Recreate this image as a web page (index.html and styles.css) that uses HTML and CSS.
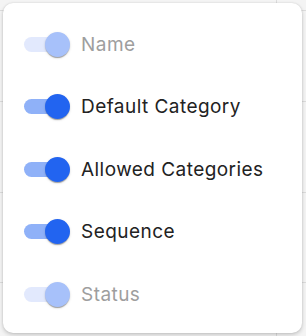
FILE: index.html
```html
<!DOCTYPE html>
<html lang="en">
<head>
    <meta charset="UTF-8">
    <meta name="viewport" content="width=device-width, initial-scale=1.0">
    <title>Columns</title>
    <link rel="stylesheet" href="styles.css">
</head>
<body>
    <div class="backdrop">
        <div class="grid-line row-1"></div>
        <div class="grid-line row-2"></div>
        <div class="grid-line row-3"></div>
        <div class="grid-line row-4"></div>
        <div class="col-line"></div>
    </div>

    <div class="menu">
        <label class="option disabled">
            <span class="switch on"><span class="track"></span><span class="thumb"></span></span>
            <span class="label-text">Name</span>
        </label>
        <label class="option">
            <span class="switch on"><span class="track"></span><span class="thumb"></span></span>
            <span class="label-text">Default Category</span>
        </label>
        <label class="option">
            <span class="switch on"><span class="track"></span><span class="thumb"></span></span>
            <span class="label-text">Allowed Categories</span>
        </label>
        <label class="option">
            <span class="switch on"><span class="track"></span><span class="thumb"></span></span>
            <span class="label-text">Sequence</span>
        </label>
        <label class="option disabled">
            <span class="switch on"><span class="track"></span><span class="thumb"></span></span>
            <span class="label-text">Status</span>
        </label>
    </div>
</body>
</html>
```

FILE: styles.css
```css
* {
    margin: 0;
    padding: 0;
    box-sizing: border-box;
}

body {
    font-family: Inter, "Noto Sans", sans-serif;
    background-color: #f4f4f4;
    width: 306px;
    height: 336px;
    overflow: hidden;
    position: relative;
}

/* table behind the popover */
.backdrop {
    position: absolute;
    inset: 0;
}

.grid-line {
    position: absolute;
    left: 0;
    width: 100%;
    height: 1px;
    background-color: #dcdcdc;
}

.row-1 { top: 10px; }
.row-2 { top: 101px; }
.row-3 { top: 192px; }
.row-4 { top: 282px; }

.col-line {
    position: absolute;
    top: 0;
    left: 276px;
    width: 1px;
    height: 100%;
    background-color: #dcdcdc;
}

.menu {
    position: absolute;
    top: 3px;
    left: 3px;
    width: 299px;
    height: 330px;
    background-color: white;
    border-radius: 10px;
    box-shadow: 0 2px 4px rgba(0, 0, 0, 0.18), 0 0 2px rgba(0, 0, 0, 0.12);
    padding: 10px 0 8px 21px;
}

.option {
    display: flex;
    align-items: center;
    height: 62.5px;
    gap: 11px;
    cursor: pointer;
}

.switch {
    position: relative;
    width: 46px;
    height: 25px;
    flex-shrink: 0;
}

.track {
    position: absolute;
    left: 0;
    top: 5px;
    width: 42px;
    height: 15px;
    border-radius: 8px;
    background-color: #8fb1f8;
}

.thumb {
    position: absolute;
    top: 0;
    right: 0;
    width: 25px;
    height: 25px;
    border-radius: 50%;
    background-color: #2264f0;
    box-shadow: 0 2px 1px -1px rgba(0, 0, 0, 0.2), 0 1px 1px rgba(0, 0, 0, 0.14), 0 1px 3px rgba(0, 0, 0, 0.12);
}

.label-text {
    font-size: 19px;
    color: #222;
    letter-spacing: 0.45px;
}

.disabled .track {
    background-color: #e2e9fd;
}

.disabled .thumb {
    background-color: #a7c1fa;
}

.disabled .label-text {
    color: #9e9e9e;
}
```
